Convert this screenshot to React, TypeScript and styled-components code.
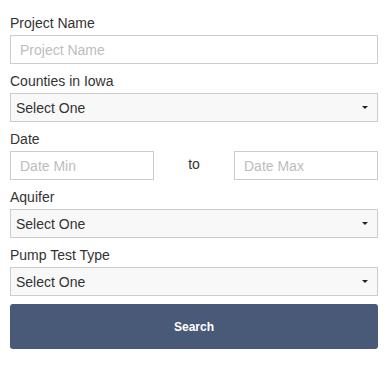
import React from 'react';
import styled, { createGlobalStyle } from 'styled-components';

const GlobalStyle = createGlobalStyle`
  body {
    margin: 0;
    background: #ffffff;
    font-family: 'Liberation Sans', Arial, sans-serif;
  }
`;

const Form = styled.form`
  display: flex;
  flex-direction: column;
  padding: 13px 12px 0 10px;
  width: 390px;
  box-sizing: border-box;
`;

const Field = styled.div`
  display: flex;
  flex-direction: column;
  gap: 2px;
  margin-bottom: 7px;
`;

const Label = styled.label`
  font-size: 14px;
  line-height: 20px;
  color: #333333;
`;

const TextInput = styled.input`
  box-sizing: border-box;
  height: 29px;
  width: 100%;
  padding: 0 9px;
  border: 1px solid #cccccc;
  border-radius: 0;
  font-family: inherit;
  font-size: 14px;
  color: #333333;
  outline: none;
  background: #ffffff;

  &::placeholder {
    color: #bdbdbd;
  }
`;

const SelectBox = styled.div`
  box-sizing: border-box;
  height: 29px;
  width: 100%;
  padding: 0 9px 0 5px;
  border: 1px solid #cccccc;
  background: #f8f8f8;
  display: flex;
  align-items: center;
  justify-content: space-between;
  font-size: 14px;
  color: #333333;
  cursor: pointer;
`;

const Caret = styled.span`
  width: 0;
  height: 0;
  border-left: 3px solid transparent;
  border-right: 3px solid transparent;
  border-top: 3px solid #222222;
`;

const RangeRow = styled.div`
  display: flex;
  align-items: center;
`;

const RangeInput = styled(TextInput)`
  width: 144px;
  flex: none;
`;

const RangeSep = styled.span`
  flex: 1;
  text-align: center;
  font-size: 14px;
  color: #333333;
  padding-bottom: 4px;
`;

const SearchButton = styled.button`
  margin-top: 1px;
  height: 45px;
  width: 100%;
  border: none;
  border-radius: 3px;
  background: #485a78;
  color: #ffffff;
  font-family: inherit;
  font-size: 12px;
  font-weight: bold;
  cursor: pointer;
`;

const Select: React.FC<{ value: string }> = ({ value }) => (
  <SelectBox role="listbox">
    <span>{value}</span>
    <Caret />
  </SelectBox>
);

const App: React.FC = () => {
  return (
    <>
      <GlobalStyle />
      <Form onSubmit={(e) => e.preventDefault()}>
        <Field>
          <Label>Project Name</Label>
          <TextInput placeholder="Project Name" />
        </Field>
        <Field>
          <Label>Counties in Iowa</Label>
          <Select value="Select One" />
        </Field>
        <Field>
          <Label>Date</Label>
          <RangeRow>
            <RangeInput placeholder="Date Min" />
            <RangeSep>to</RangeSep>
            <RangeInput placeholder="Date Max" />
          </RangeRow>
        </Field>
        <Field>
          <Label>Aquifer</Label>
          <Select value="Select One" />
        </Field>
        <Field>
          <Label>Pump Test Type</Label>
          <Select value="Select One" />
        </Field>
        <SearchButton type="submit">Search</SearchButton>
      </Form>
    </>
  );
};

export default App;
